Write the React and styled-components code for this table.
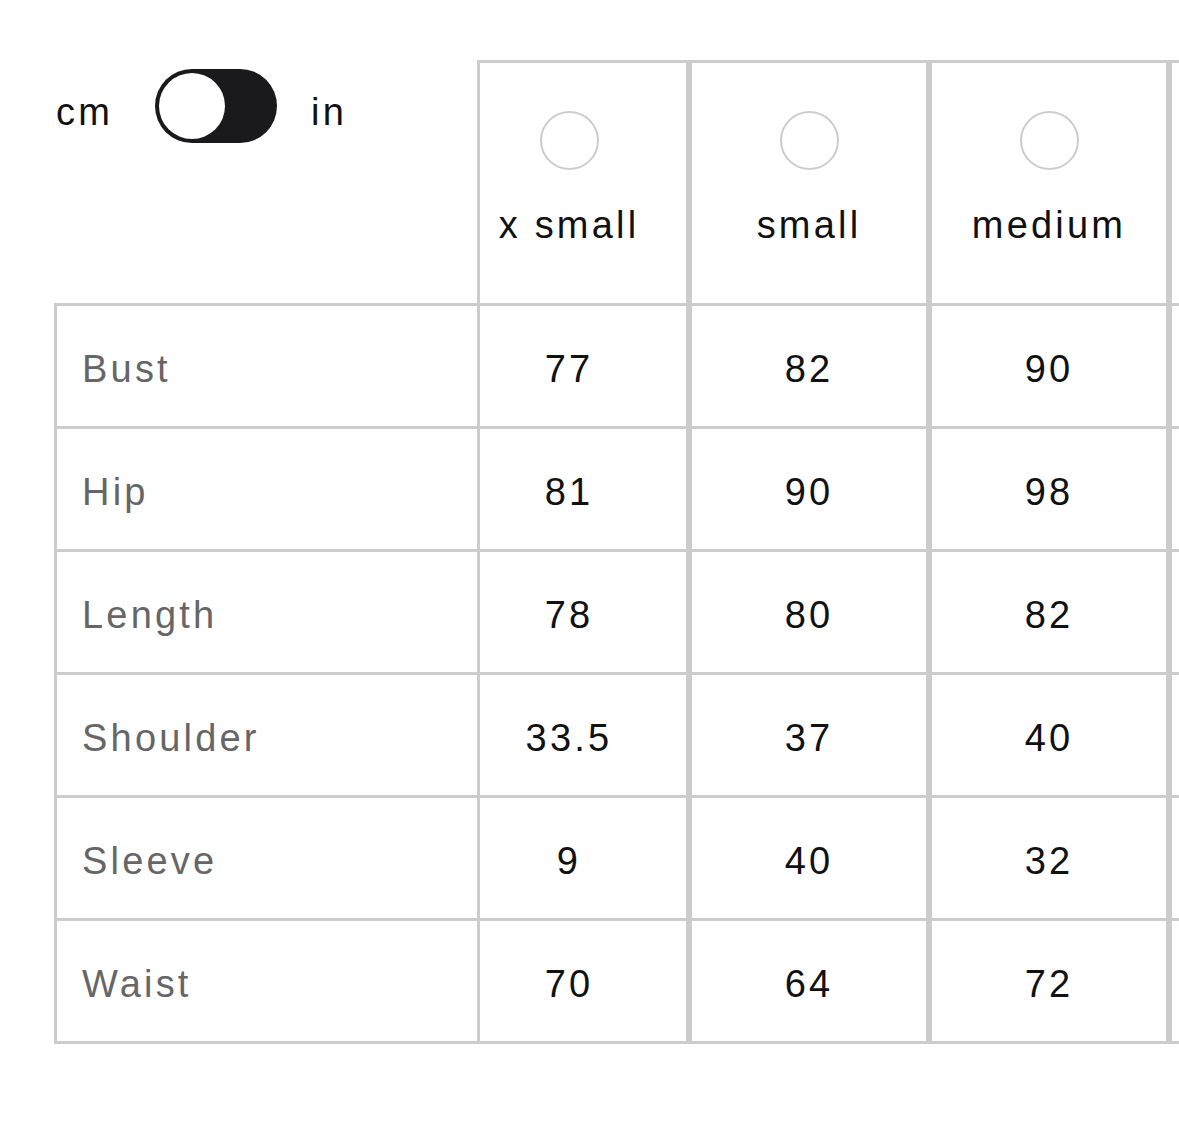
import React, { useLayoutEffect, useRef, useState } from 'react'
import styled, { createGlobalStyle } from 'styled-components'

const BORDER = '#cccccc'

const sizes = ['x small', 'small', 'medium', 'large', 'x large']

const measurements = [
  { label: 'Bust', values: ['77', '82', '90', '98', '106'] },
  { label: 'Hip', values: ['81', '90', '98', '106', '114'] },
  { label: 'Length', values: ['78', '80', '82', '84', '86'] },
  { label: 'Shoulder', values: ['33.5', '37', '40', '43', '46'] },
  { label: 'Sleeve', values: ['9', '40', '32', '34', '36'] },
  { label: 'Waist', values: ['70', '64', '72', '80', '88'] },
]

function SizeTable() {
  const scrollRef = useRef(null)
  const [inches, setInches] = useState(false)
  const [selected, setSelected] = useState(null)

  // the chart opens scrolled a little, so the first size sits under the sticky labels
  useLayoutEffect(() => {
    if (scrollRef.current) scrollRef.current.scrollLeft = 31
  }, [])

  return (
    <Scroller ref={scrollRef}>
      <Grid $cols={sizes.length}>
        <Corner>
          <UnitSwitch>
            <Unit $gap="0 42px 0 2px">cm</Unit>
            <Track role="switch" aria-checked={inches} onClick={() => setInches(!inches)}>
              <Knob $on={inches} />
            </Track>
            <Unit $gap="0 0 0 34px">in</Unit>
          </UnitSwitch>
        </Corner>
        {sizes.map((size) => (
          <SizeHead key={size} onClick={() => setSelected(size)}>
            <Radio $checked={selected === size} />
            <SizeName>{size}</SizeName>
          </SizeHead>
        ))}
        {measurements.map((row) => (
          <React.Fragment key={row.label}>
            <Label>{row.label}</Label>
            {row.values.map((v, i) => (
              <Value key={`${row.label}-${i}`}>{v}</Value>
            ))}
          </React.Fragment>
        ))}
      </Grid>
    </Scroller>
  )
}

export default function App() {
  return (
    <>
      <GlobalStyle />
      <Page>
        <SizeTable />
      </Page>
    </>
  )
}

const GlobalStyle = createGlobalStyle`
  html, body {
    margin: 0;
    padding: 0;
    background: #fff;
  }
  body {
    font-family: "Liberation Sans", Arial, sans-serif;
    color: #111;
  }
`

const Page = styled.div`
  padding: 60px 0 0 54px;
  min-height: 1121px;
  box-sizing: border-box;
`

const Scroller = styled.div`
  overflow-x: auto;
  scrollbar-width: none;
  &::-webkit-scrollbar {
    display: none;
  }
`

const Grid = styled.div`
  display: grid;
  grid-template-columns: 426px repeat(${(p) => p.$cols}, 240px);
  width: max-content;
  font-size: 38px;
  letter-spacing: 3.2px;
`

const Sticky = styled.div`
  position: sticky;
  left: 0;
  z-index: 1;
  background: #fff;
  box-sizing: border-box;
`

const Corner = styled(Sticky)`
  border-right: 3px solid ${BORDER};
  border-bottom: 3px solid ${BORDER};
  padding-top: 9px;
`

const UnitSwitch = styled.div`
  display: flex;
  align-items: center;
`

const Unit = styled.span`
  margin: ${(p) => p.$gap};
  padding-top: 12px;
  color: #111;
`

const Track = styled.button`
  display: flex;
  align-items: center;
  width: 122px;
  height: 74px;
  padding: 4px;
  border: none;
  border-radius: 37px;
  background: #1a1a1c;
  box-sizing: border-box;
  cursor: pointer;
`

const Knob = styled.span`
  display: block;
  width: 66px;
  height: 66px;
  border-radius: 50%;
  background: #fff;
  margin-left: ${(p) => (p.$on ? '48px' : '0')};
`

const SizeHead = styled.div`
  display: flex;
  flex-direction: column;
  align-items: center;
  height: 246px;
  box-sizing: border-box;
  border: 3px solid ${BORDER};
  padding-top: 48px;
  cursor: pointer;
`

const Radio = styled.span`
  width: 59px;
  height: 59px;
  box-sizing: border-box;
  border-radius: 50%;
  border: 2.5px solid ${(p) => (p.$checked ? '#111' : BORDER)};
`

const SizeName = styled.span`
  margin-top: 34px;
  white-space: nowrap;
  color: #111;
`

const Label = styled(Sticky)`
  display: flex;
  align-items: center;
  height: 123px;
  padding: 6px 0 0 25px;
  border-left: 3px solid ${BORDER};
  border-right: 3px solid ${BORDER};
  border-bottom: 3px solid ${BORDER};
  color: #666;
`

const Value = styled.div`
  display: flex;
  align-items: center;
  justify-content: center;
  height: 123px;
  box-sizing: border-box;
  padding-top: 6px;
  border-left: 3px solid ${BORDER};
  border-right: 3px solid ${BORDER};
  border-bottom: 3px solid ${BORDER};
  color: #111;
`
